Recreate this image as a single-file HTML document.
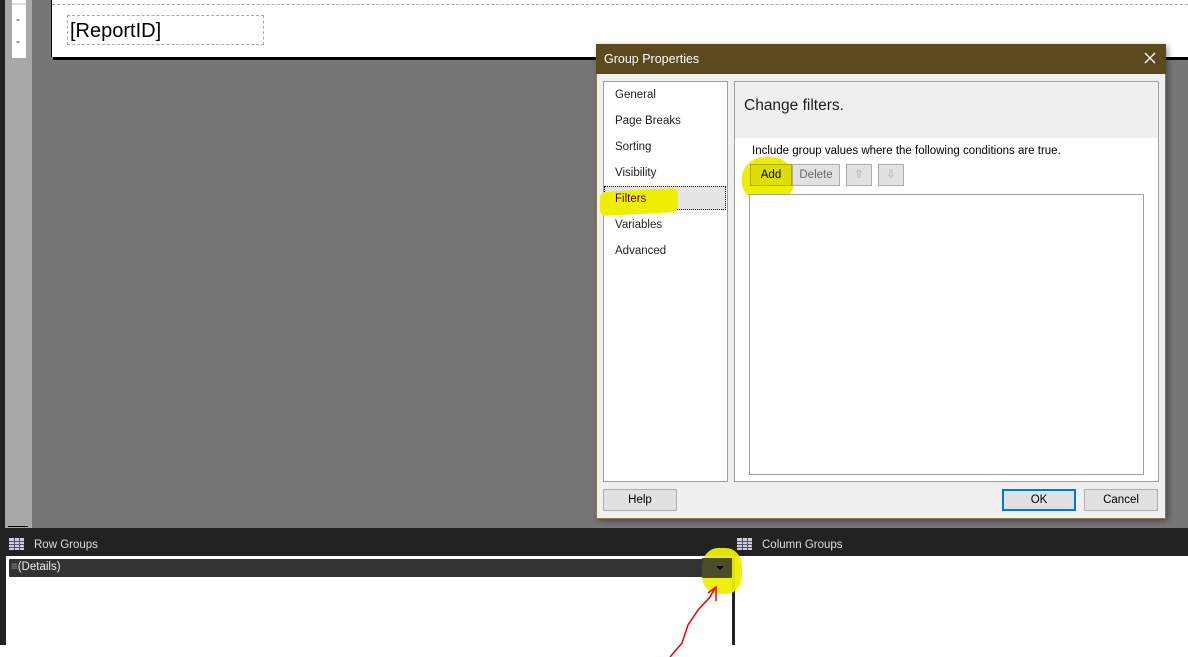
<!DOCTYPE html>
<html><head><style>
body{margin:0;width:1188px;height:657px;overflow:hidden;background:#fff;position:relative;font-family:"Liberation Sans",sans-serif}
div{position:absolute;box-sizing:border-box}
.t{font-size:11.5px;color:#1e1e1e;white-space:nowrap}
.btn{background:#e1e1e1;border:1px solid #adadad;font-size:11.5px;text-align:center;line-height:20px;color:#000}
</style></head><body>
<div style="left:0;top:0;width:1188px;height:528px;background:#777"></div>
<div style="left:0;top:0;width:5px;height:645px;background:#222"></div>
<div style="left:5px;top:0;width:27px;height:528px;background:#a8a8a8"></div>
<div style="left:12px;top:0;width:14px;height:58px;background:#fff"></div>
<div style="left:12px;top:3px;width:14px;height:2px;background:#ddd"></div>
<div class="t" style="left:16px;top:14px">-</div>
<div class="t" style="left:16px;top:36px">-</div>
<div style="left:8px;top:526px;width:20px;height:1px;background:#000"></div>
<div style="left:51px;top:0;width:1137px;height:57px;background:#fff;border-left:1px solid #000"></div>
<div style="left:53px;top:57px;width:1135px;height:3px;background:#000"></div>
<div style="left:52px;top:4px;width:1136px;border-top:1px dashed #aaa"></div>
<div style="left:67px;top:15px;width:197px;height:30px;border:1px dashed #aaa"></div>
<div style="left:70px;top:20px;font-size:20px;color:#000">[ReportID]</div>

<div style="left:0;top:528px;width:1188px;height:28px;background:#222"></div>
<svg style="position:absolute;left:9px;top:538px" width="15" height="12"><rect width="15" height="12" fill="#ccd"/><g stroke="#556" stroke-width="1"><path d="M0 3.5H15M0 6.5H15M0 9.5H15M5.5 0V12M10.5 0V12"/></g></svg>
<div class="t" style="left:34px;top:539px;color:#ddd">Row Groups</div>
<svg style="position:absolute;left:737px;top:538px" width="15" height="12"><rect width="15" height="12" fill="#ccd"/><g stroke="#556"><path d="M0 3.5H15M0 6.5H15M0 9.5H15M5.5 0V12M10.5 0V12"/></g></svg>
<div class="t" style="left:762px;top:539px;color:#ddd">Column Groups</div>
<div style="left:4px;top:555px;width:2px;height:90px;background:#222"></div>
<div style="left:732px;top:555px;width:3px;height:90px;background:#222"></div>
<div style="left:8px;top:558px;width:723px;height:20px;background:#333;border:1px solid #fff;border-radius:2px"></div>
<div class="t" style="left:11px;top:561px;color:#eee"><span style="color:#999">≡</span>(Details)</div>
<div style="left:702px;top:548px;width:40px;height:46px;background:#ee0;border-radius:40%;opacity:.95"></div>
<div style="left:702px;top:558px;width:30px;height:20px;background:#333;opacity:.85"></div>
<div style="left:716px;top:566px;border:4px solid transparent;border-top:4px solid #000"></div>
<svg style="position:absolute;left:660px;top:585px" width="70" height="72"><path d="M10 72 L22 58 L28 40 L38 25 L50 12 L55 3 M48 8 L56 2 L56 16" stroke="#e00" stroke-width="1.5" fill="none"/></svg>

<div style="left:596px;top:44px;width:570px;height:475px;background:#f0f0f0;border:1px solid #8a7a50;box-shadow:2px 2px 6px rgba(0,0,0,.4)"></div>
<div style="left:596px;top:44px;width:570px;height:30px;background:#5c4a1e"></div>
<div class="t" style="left:604px;top:52px;color:#fff;font-size:12.5px">Group Properties</div>
<svg style="position:absolute;left:1144px;top:52px" width="12" height="12"><path d="M1 1L11 11M11 1L1 11" stroke="#fff" stroke-width="1.3"/></svg>
<div style="left:603px;top:81px;width:125px;height:401px;background:#fff;border:1px solid #a0a0a0"></div>
<div class="t" style="left:615px;top:89px">General</div>
<div class="t" style="left:615px;top:115px">Page Breaks</div>
<div class="t" style="left:615px;top:141px">Sorting</div>
<div class="t" style="left:615px;top:167px">Visibility</div>
<div style="left:604px;top:186px;width:122px;height:24px;background:#e5e5e5;border:1px dotted #000"></div>
<div style="left:600px;top:190px;width:78px;height:24px;background:#ee0;border-radius:6px;transform:skewY(-3deg)"></div>
<div class="t" style="left:615px;top:193px;color:#500">Filters</div>
<div class="t" style="left:615px;top:219px">Variables</div>
<div class="t" style="left:615px;top:245px">Advanced</div>
<div style="left:734px;top:81px;width:425px;height:401px;background:#fff;border:1px solid #a0a0a0"></div>
<div style="left:735px;top:82px;width:423px;height:56px;background:#efefef"></div>
<div class="t" style="left:744px;top:97px;font-size:15.5px">Change filters.</div>
<div class="t" style="left:752px;top:145px;font-size:11.5px;color:#000">Include group values where the following conditions are true.</div>
<div style="left:742px;top:157px;width:52px;height:46px;background:#ee0;border-radius:45%"></div>
<div class="btn" style="left:750px;top:164px;width:42px;height:22px;background:#dd0;border-color:#aa0">Add</div>
<div class="btn" style="left:792px;top:164px;width:48px;height:22px;color:#666">Delete</div>
<div class="btn" style="left:846px;top:164px;width:26px;height:22px;color:#aaa">⇧</div>
<div class="btn" style="left:878px;top:164px;width:26px;height:22px;color:#aaa">⇩</div>
<div style="left:749px;top:194px;width:395px;height:281px;background:#fff;border:1px solid #a0a0a0"></div>
<div class="btn" style="left:603px;top:489px;width:74px;height:22px">Help</div>
<div class="btn" style="left:1002px;top:489px;width:74px;height:22px;border:2px solid #0078d7;line-height:18px">OK</div>
<div class="btn" style="left:1084px;top:489px;width:74px;height:22px">Cancel</div>
</body></html>
